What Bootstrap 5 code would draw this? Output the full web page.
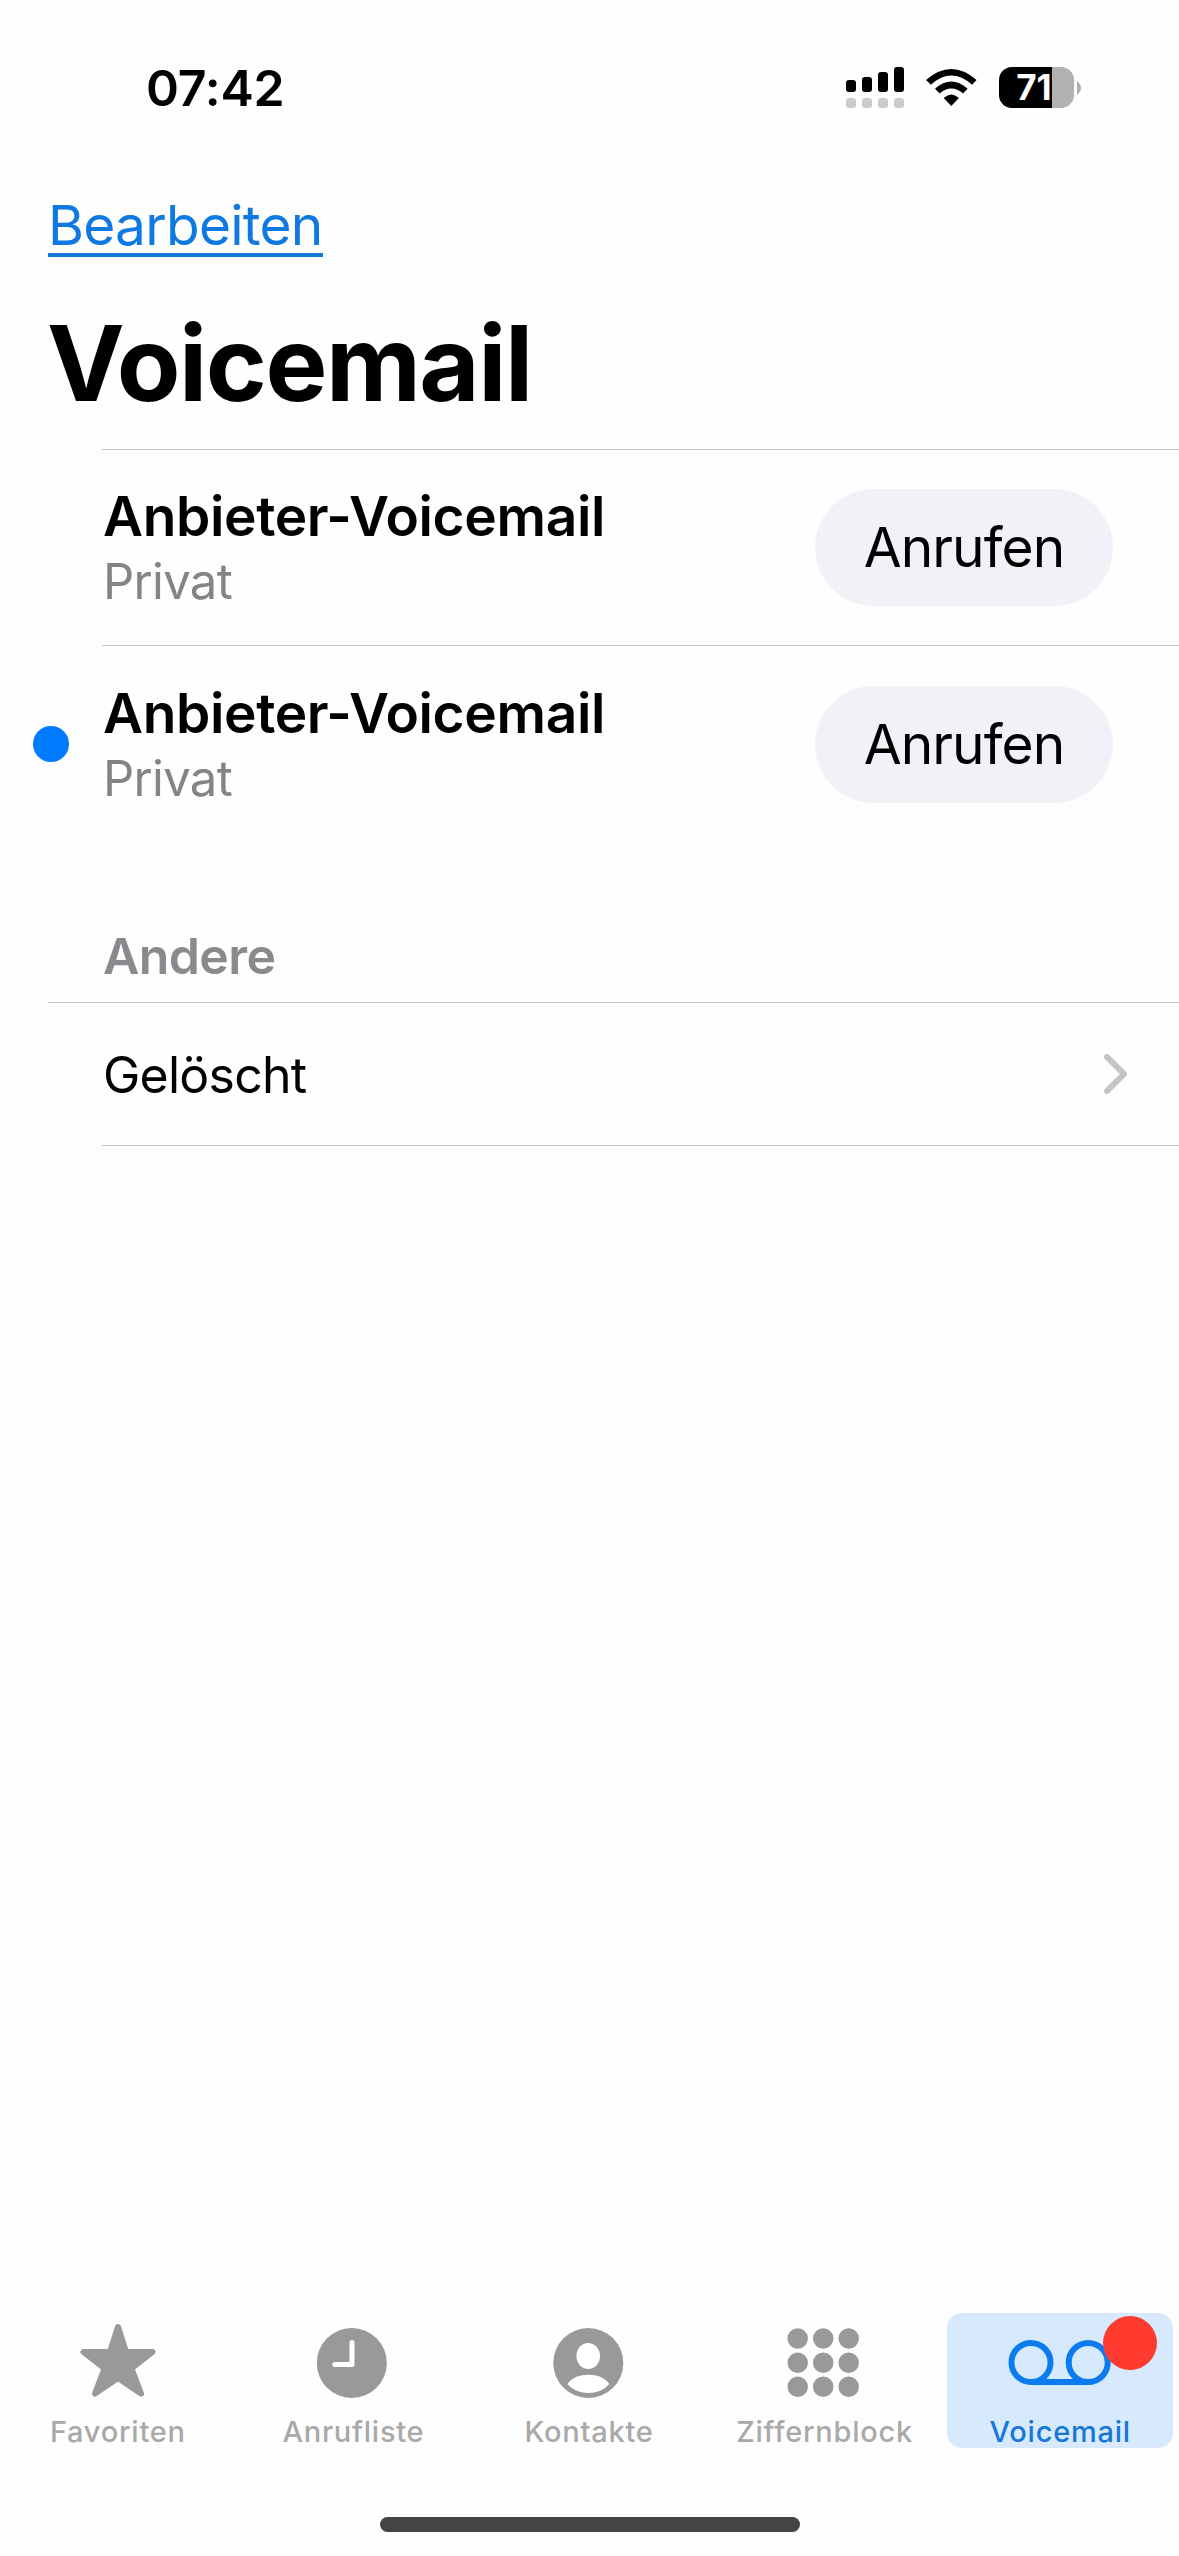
<!DOCTYPE html>
<html lang="de">
<head>
<meta charset="utf-8">
<meta name="viewport" content="width=device-width, initial-scale=1">
<title>Voicemail</title>
<link href="https://cdn.jsdelivr.net/npm/bootstrap@5.3.0/dist/css/bootstrap.min.css" rel="stylesheet">
<style>
body{font-family:Inter,"Liberation Sans",sans-serif;color:#000;background:#fefefe;height:2556px;overflow:hidden}
.statusbar{height:176px;padding:0 98px 0 146px}
.clock{font-size:50px;font-weight:600;letter-spacing:-.2px}
.status-icons{margin-bottom:1px}
.wifi{margin:0 22px}
.bat{width:75px;height:41px;border-radius:13px;background:linear-gradient(90deg,#000 53px,#b1b1b1 53px);color:#fff;font-size:35px;font-weight:700;line-height:41px;padding-right:5px}
.toolbar{height:98px;padding-left:48px}
.edit-link{font-size:55px;line-height:62px;letter-spacing:-.75px;color:#0f79e2;border-bottom:4px solid #1679d8;height:63px}
.page-title{height:175px;padding:3px 0 0 47px;font-size:104px;font-weight:700;line-height:172px;letter-spacing:-1.5px}
.gutter{width:102px}
.unread{width:36px;height:36px;background:#007aff}
.row-first{height:196px}
.row-second{height:198px}
.cell-body{border-top:1px solid #c5c5c7;padding-left:1px}
.vm-text{padding-top:3px}
.vm-name{font-size:55px;font-weight:600;line-height:66px;letter-spacing:-.35px}
.vm-sub{font-size:49px;line-height:66px;letter-spacing:-.7px;color:#848484}
.call-btn{width:298px;height:117px;background:#f2f1f7;font-size:55px;letter-spacing:-.9px;margin-right:66px;color:#000}
.section-head{height:159px;padding-left:103px;font-size:50px;font-weight:600;line-height:92px;letter-spacing:-.6px;color:#8a8a8e}
.rule-head{margin-left:48px;border-top:1px solid #c5c5c7}
.deleted{height:143px;margin-left:102px;padding-left:1px;border-bottom:1px solid #c5c5c7;font-size:50px;letter-spacing:-.75px}
.deleted span{padding-top:2px}
.chevron{margin-right:52px}
.tab{flex:1 1 0;height:135px;margin:0 5px;color:#a9a9a9;font-size:29px;font-weight:500;line-height:33px;letter-spacing:.75px}
.tab svg{display:block;overflow:visible;color:#999}
.tab.on{background:#d7eafd;border-radius:15px;color:#1677d8;margin-right:6px}
.tab.on svg{color:#0a7cf0}
.dot-badge{width:54px;height:54px;background:#ff3b30;top:3px;right:16px}
.home{width:420px;height:15px;background:#444;margin:69px auto 24px}
</style>
</head>
<body class="d-flex flex-column">
<header class="statusbar d-flex align-items-center justify-content-between flex-shrink-0">
  <div class="clock">07:42</div>
  <div class="status-icons d-flex align-items-center">
    <svg width="58" height="41" viewBox="0 0 58 41"><g><rect y="13" width="10" height="12" rx="3"/><rect x="16" y="10" width="10" height="15" rx="3"/><rect x="32" y="5" width="10" height="20" rx="3"/><rect x="48" width="10" height="25" rx="3"/></g><g fill="#ccc"><rect y="31" width="10" height="10" rx="3"/><rect x="16" y="31" width="10" height="10" rx="3"/><rect x="32" y="31" width="10" height="10" rx="3"/><rect x="48" y="31" width="10" height="10" rx="3"/></g></svg>
    <svg class="wifi" width="51" height="37" viewBox="0 0 51 37"><path d="M0 11Q25.3-11 50.6 11L46 15.7Q25.3-2.5 5 15.7ZM9 19.8Q25.3 5.2 41.6 19.8L37 24.5Q25.3 14.5 13.6 24.5ZM17.7 29Q25.3 22 32.9 29L25.3 37Z"/></svg>
    <div class="bat text-center">71</div>
    <svg width="7" height="14" viewBox="0 0 7 14"><path d="M3 0Q7 3 7 7T3 14Z" fill="#b1b1b1"/></svg>
  </div>
</header>
<nav class="toolbar d-flex align-items-center flex-shrink-0"><a href="#" class="edit-link text-decoration-none">Bearbeiten</a></nav>
<h1 class="page-title m-0 flex-shrink-0">Voicemail</h1>
<main>
  <div class="row-first d-flex">
    <div class="gutter"></div>
    <div class="cell-body flex-grow-1 d-flex align-items-center justify-content-between">
      <div class="vm-text"><div class="vm-name">Anbieter-Voicemail</div><div class="vm-sub">Privat</div></div>
      <button class="btn call-btn rounded-pill p-0">Anrufen</button>
    </div>
  </div>
  <div class="row-second d-flex">
    <div class="gutter d-flex align-items-center justify-content-center"><span class="unread rounded-circle"></span></div>
    <div class="cell-body flex-grow-1 d-flex align-items-center justify-content-between">
      <div class="vm-text"><div class="vm-name">Anbieter-Voicemail</div><div class="vm-sub">Privat</div></div>
      <button class="btn call-btn rounded-pill p-0">Anrufen</button>
    </div>
  </div>
  <h2 class="section-head m-0 d-flex align-items-end">Andere</h2>
  <div class="rule-head"></div>
  <a href="#" class="deleted d-flex align-items-center justify-content-between text-decoration-none text-black"><span>Gelöscht</span>
    <svg class="chevron" width="23" height="40" viewBox="0 0 23 40" fill="none" stroke="#c4c4c6" stroke-width="6" stroke-linecap="round" stroke-linejoin="round"><path d="M3 3L20 20L3 37"/></svg></a>
</main>
<footer class="mt-auto">
  <nav class="d-flex text-center">
    <div class="tab"><svg class="mx-auto" width="120" height="102" fill="currentColor" stroke="currentColor" stroke-width="6" stroke-linejoin="round"><path d="M60 14L68 39H94.5L73.5 55.5L83 80.5L60 65L37 80.5L46.5 55.5L25.5 39H52Z"/></svg>Favoriten</div>
    <div class="tab"><svg class="mx-auto" width="120" height="102"><circle cx="58.8" cy="50" r="35" fill="currentColor"/><path d="M59 29.500V51.500H41.800" fill="none" stroke="#fff" stroke-width="5" stroke-linecap="round" stroke-linejoin="round"/></svg>Anrufliste</div>
    <div class="tab"><svg class="mx-auto" width="120" height="102"><circle cx="59.3" cy="50" r="35" fill="currentColor"/><ellipse cx="59.2" cy="43" rx="11.8" ry="13" fill="#fff"/><path d="M38.3 71C46 58.500 73 58.500 80.300 71C70 83 49 83 38.300 71Z" fill="#fff"/></svg>Kontakte</div>
    <div class="tab"><svg class="mx-auto" width="120" height="102" fill="none" stroke="currentColor" stroke-width="20.5" stroke-linecap="round"><path d="M32.700 25.500h0M58.200 25.500h0M83.700 25.500h0M32.700 49.700h0M58.200 49.700h0M83.700 49.700h0M32.700 73.800h0M58.200 73.800h0M83.700 73.800h0"/></svg>Ziffernblock</div>
    <div class="tab on position-relative"><svg class="mx-auto" width="120" height="102" fill="none" stroke="currentColor" stroke-width="6"><circle cx="31" cy="49.5" r="19.5"/><circle cx="88.2" cy="49.5" r="19.5"/><path d="M31 69H88"/></svg>Voicemail<span class="dot-badge position-absolute rounded-circle"></span></div>
  </nav>
  <div class="home rounded-pill"></div>
</footer>
<script src="https://cdn.jsdelivr.net/npm/bootstrap@5.3.0/dist/js/bootstrap.bundle.min.js"></script>
</body>
</html>
